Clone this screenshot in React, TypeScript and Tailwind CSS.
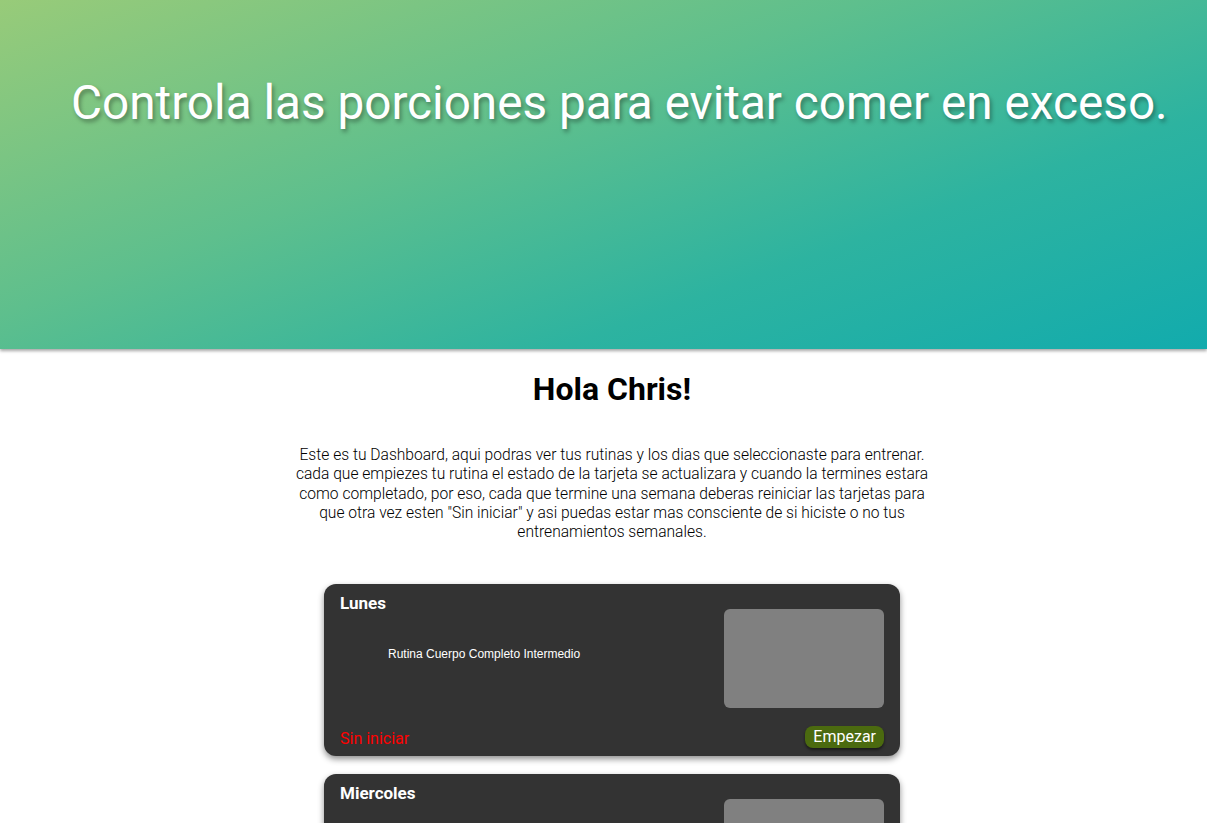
import React from 'react';

interface DayCardProps {
  day: string;
  routine?: string;
  status: string;
}

function DayCard({ day, routine, status }: DayCardProps) {
  return (
    <div className="w-[576px] h-[172px] bg-[#333333] rounded-xl shadow-[0_3px_6px_rgba(0,0,0,0.45)] px-4 pt-[7px] pb-2 flex flex-col">
      <div className="flex flex-1">
        <div className="flex-1 flex flex-col">
          <h3 className="text-white font-bold text-[17px] leading-6 font-['Roboto',sans-serif]">{day}</h3>
          <p className="mt-[32px] ml-12 text-white text-[12px] leading-[14px] font-['Liberation_Sans',sans-serif]">{routine}</p>
        </div>
        <div className="w-40 h-[99px] mt-[18px] bg-[#808080] rounded-md" />
      </div>
      <div className="flex items-center justify-between h-[22px]">
        <span className="text-[#ff0000] text-[16px] leading-[22px] pt-1 font-['Roboto',sans-serif]">{status}</span>
        <button className="bg-[#4b6a0f] text-white text-[16px] font-['Roboto',sans-serif] px-2 h-[22px] leading-[22px] rounded-lg shadow-[0_2px_3px_rgba(0,0,0,0.5)]">
          Empezar
        </button>
      </div>
    </div>
  );
}

export default function App() {
  return (
    <div className="min-h-screen bg-white font-['Roboto',sans-serif]">
      <header className="h-[349px] bg-[linear-gradient(160deg,#98cb79_0%,#5ebf8d_40%,#2db3a0_70%,#12abad_100%)] shadow-[0_2px_3px_rgba(0,0,0,0.35)] pl-[71px] pt-[74px]">
        <h1 className="text-white text-[47.7px] leading-[58px] [text-shadow:2px_3px_4px_rgba(0,0,0,0.35)] whitespace-nowrap">
          Controla las porciones para evitar comer en exceso.
        </h1>
      </header>
      <main className="flex flex-col items-center pl-[17px]">
        <h2 className="mt-5 text-[32px] font-bold leading-10 text-black">Hola Chris!</h2>
        <p className="mt-[37px] w-[640px] text-center text-[15.6px] leading-[19.3px] font-light text-black">
          Este es tu Dashboard, aqui podras ver tus rutinas y los dias que seleccionaste para entrenar. cada que empiezes tu rutina el estado de la tarjeta se actualizara y cuando la termines estara como completado, por eso, cada que termine una semana deberas reiniciar las tarjetas para que otra vez esten "Sin iniciar" y asi puedas estar mas consciente de si hiciste o no tus entrenamientos semanales.
        </p>
        <div className="mt-[42px] flex flex-col gap-[18px] pb-8">
          <DayCard day="Lunes" routine="Rutina Cuerpo Completo Intermedio" status="Sin iniciar" />
          <DayCard day="Miercoles" routine="Rutina Cuerpo Completo Intermedio" status="Sin iniciar" />
        </div>
      </main>
    </div>
  );
}
